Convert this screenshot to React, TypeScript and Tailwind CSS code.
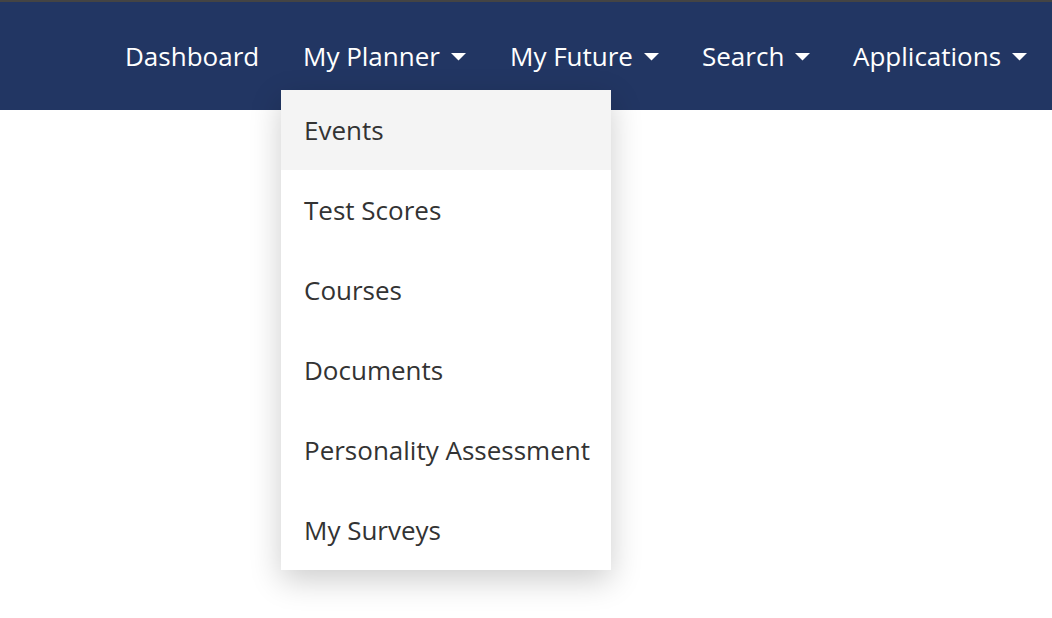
import React from "react";

const Caret = () => (
  <svg width="15" height="8" viewBox="0 0 15 8" className="ml-[11px] mt-[1px] shrink-0">
    <path d="M0 0 H15 L7.5 7.5 Z" fill="#ffffff" />
  </svg>
);

export default function App() {
  const items = ["Events", "Test Scores", "Courses", "Documents", "Personality Assessment", "My Surveys"];
  return (
    <div className="w-[1052px] h-[618px] bg-white overflow-hidden" style={{ fontFamily: '"Open Sans", "Liberation Sans", sans-serif' }}>
      <div className="h-[2px] bg-[#444444]" />
      <nav className="relative h-[108px] bg-[#223663] flex items-center justify-end">
        <div className="flex items-center text-white text-[26px] leading-none whitespace-nowrap">
          <div className="w-[178px] flex items-center">
            <span>Dashboard</span>
          </div>
          <div className="relative w-[207px] flex items-center">
            <span>My Planner</span>
            <Caret />
            <div className="absolute left-[-22px] top-[47px] w-[330px] bg-white shadow-[0_10px_30px_rgba(0,0,0,0.2)] z-10">
              {items.map((t, i) => (
                <div
                  key={t}
                  className={`h-[80px] flex items-center pl-[23px] text-[26px] text-[#333333] ${i === 0 ? "bg-[#f4f4f4]" : ""}`}
                >
                  {t}
                </div>
              ))}
            </div>
          </div>
          <div className="w-[192px] flex items-center">
            <span>My Future</span>
            <Caret />
          </div>
          <div className="w-[151px] flex items-center">
            <span>Search</span>
            <Caret />
          </div>
          <div className="w-[199px] flex items-center">
            <span>Applications</span>
            <Caret />
          </div>
        </div>
      </nav>
    </div>
  );
}
